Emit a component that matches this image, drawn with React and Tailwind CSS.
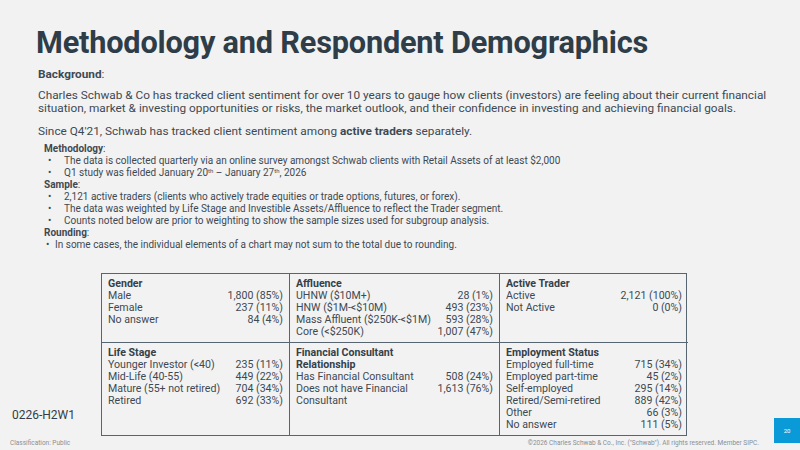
import React from "react";

const tables = [
  [
    {
      title: ["Gender"],
      rows: [
        ["Male", "1,800 (85%)"],
        ["Female", "237 (11%)"],
        ["No answer", "84 (4%)"],
      ],
    },
    {
      title: ["Affluence"],
      rows: [
        ["UHNW ($10M+)", "28 (1%)"],
        ["HNW ($1M-<$10M)", "493 (23%)"],
        ["Mass Affluent ($250K-<$1M)", "593 (28%)"],
        ["Core (<$250K)", "1,007 (47%)"],
      ],
    },
    {
      title: ["Active Trader"],
      rows: [
        ["Active", "2,121 (100%)"],
        ["Not Active", "0 (0%)"],
      ],
    },
  ],
  [
    {
      title: ["Life Stage"],
      rows: [
        ["Younger Investor (<40)", "235 (11%)"],
        ["Mid-Life (40-55)", "449 (22%)"],
        ["Mature (55+ not retired)", "704 (34%)"],
        ["Retired", "692 (33%)"],
      ],
    },
    {
      title: ["Financial Consultant", "Relationship"],
      rows: [
        ["Has Financial Consultant", "508 (24%)"],
        ["Does not have Financial", "1,613 (76%)"],
        ["Consultant", ""],
      ],
    },
    {
      title: ["Employment Status"],
      rows: [
        ["Employed full-time", "715 (34%)"],
        ["Employed part-time", "45 (2%)"],
        ["Self-employed", "295 (14%)"],
        ["Retired/Semi-retired", "889 (42%)"],
        ["Other", "66 (3%)"],
        ["No answer", "111 (5%)"],
      ],
    },
  ],
];

const Cell = ({ cell, last, bottom }) => (
  <div
    className={`px-[6px] pt-[4px] pb-[4px] border-[#56656f] ${
      last ? "" : "border-r-[1.5px]"
    } ${bottom ? "" : "border-b-[1.5px]"}`}
  >
    {cell.title.map((t) => (
      <div key={t} className="font-bold leading-[12px] text-[#34404a]">
        {t}
      </div>
    ))}
    {cell.rows.map(([label, value]) => (
      <div key={label} className="flex justify-between leading-[12px]">
        <span>{label}</span>
        <span>{value}</span>
      </div>
    ))}
  </div>
);

const Bullet = ({ children, tight }) => (
  <div className={`flex ${tight ? "pl-[2px]" : "pl-[4px]"}`}>
    <span className={tight ? "w-[9px]" : "w-[16px]"}>•</span>
    <span>{children}</span>
  </div>
);

export default function App() {
  return (
    <div
      className="w-[800px] h-[450px] bg-[#f2f2f2] text-[#3e4952] overflow-hidden flex flex-col"
      style={{ fontFamily: "Roboto, 'Liberation Sans', sans-serif" }}
    >
      <h1 className="pl-[36px] pt-[25px] text-[30.7px] leading-[36px] font-bold text-[#2e3d48] tracking-[-0.2px] whitespace-nowrap">
        Methodology and Respondent Demographics
      </h1>

      <div className="pl-[38px] pt-[7px] text-[11.8px] leading-[13.5px] whitespace-nowrap">
        <div className="font-bold text-[#3e4a54]">
          Background<span className="font-normal">:</span>
        </div>
        <p className="mt-[7px]">
          Charles Schwab &amp; Co has tracked client sentiment for over 10 years to gauge how clients (investors) are feeling about their current financial
          <br />
          situation, market &amp; investing opportunities or risks, the market outlook, and their confidence in investing and achieving financial goals.
        </p>
        <p className="mt-[9px]">
          Since Q4'21, Schwab has tracked client sentiment among <b>active traders</b> separately.
        </p>
      </div>

      <div className="pl-[44px] pt-[5px] text-[10px] leading-[12px]">
        <div className="font-bold">
          Methodology<span className="font-normal">:</span>
        </div>
        <Bullet>
          The data is collected quarterly via an online survey amongst Schwab clients with Retail Assets of at least $2,000
        </Bullet>
        <Bullet>
          Q1 study was fielded January 20<sup className="text-[6px]">th</sup> – January 27<sup className="text-[6px]">th</sup>, 2026
        </Bullet>
        <div className="font-bold">
          Sample<span className="font-normal">:</span>
        </div>
        <Bullet>
          2,121 active traders (clients who actively trade equities or trade options, futures, or forex).
        </Bullet>
        <Bullet>
          The data was weighted by Life Stage and Investible Assets/Affluence to reflect the Trader segment.
        </Bullet>
        <Bullet>
          Counts noted below are prior to weighting to show the sample sizes used for subgroup analysis.
        </Bullet>
        <div className="font-bold">
          Rounding<span className="font-normal">:</span>
        </div>
        <Bullet tight>
          In some cases, the individual elements of a chart may not sum to the total due to rounding.
        </Bullet>
      </div>

      <div className="flex mt-[22px]">
        <div className="w-[101px] flex flex-col justify-end pl-[12px] pb-[12px] text-[12px] text-[#333d45]">
          0226-H2W1
        </div>
        <div className="w-[586px] grid grid-cols-[188px_210px_188px] border-[1.5px] border-[#56656f] text-[10.6px] text-[#3e4952]">
          {tables.map((row, ri) =>
            row.map((cell, ci) => (
              <Cell
                key={`${ri}-${ci}`}
                cell={cell}
                last={ci === 2}
                bottom={ri === 1}
              />
            ))
          )}
        </div>
        <div className="flex-1 flex justify-end items-end">
          <div className="w-[26px] h-[25px] bg-[#0a9ad8] text-white text-[6px] flex items-center justify-center -mb-[7px]">
            20
          </div>
        </div>
      </div>

      <div className="flex justify-between items-end -mt-[1px] text-[6.5px] text-[#8a8f94]">
        <span className="pl-[10px]">Classification: Public</span>
        <span className="pr-[41px] pt-[4px]">
          ©2026 Charles Schwab &amp; Co., Inc. ("Schwab"). All rights reserved. Member SIPC.
        </span>
      </div>
    </div>
  );
}
